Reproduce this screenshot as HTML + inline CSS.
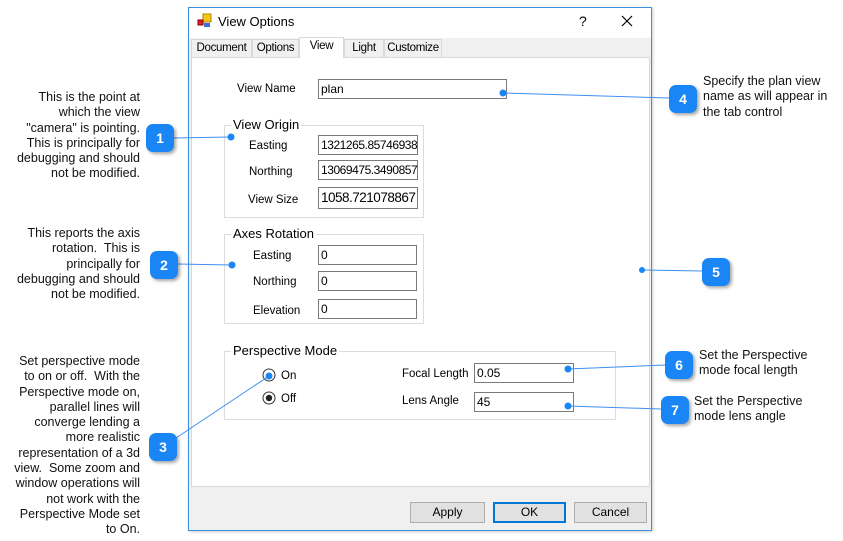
<!DOCTYPE html>
<html><head><meta charset="utf-8"><style>
*{margin:0;padding:0;box-sizing:border-box}
body{width:843px;height:541px;background:#fff;position:relative;overflow:hidden;font-family:"Liberation Sans",Arial,sans-serif;font-size:12px;color:#000}
.a{position:absolute}
.note{position:absolute;font-size:12.5px;line-height:15.3px;color:#111}
.r{text-align:right;right:703px}
.badge{position:absolute;width:28px;height:28px;border-radius:7px;background:#1a86f5;color:#fff;font-weight:bold;font-size:14px;text-align:center;line-height:28px;box-shadow:2px 2px 3px rgba(0,0,0,.35)}
.in{position:absolute;border:1px solid #7a7a7a;background:#fff;padding-left:2px;font-size:12px;line-height:19px;white-space:nowrap;overflow:hidden}
.gb{position:absolute;border:1px solid #dcdcdc}
.gt{position:absolute;background:#fff;font-size:13px;padding:0 2px;top:-9px;left:6px;line-height:16px}
.lb{position:absolute;font-size:11.5px;line-height:14px}
.btn{position:absolute;background:#e1e1e1;border:1px solid #adadad;text-align:center;line-height:18px;font-size:12px}
.tab{position:absolute;top:39px;height:19px;border:1px solid #d9d9d9;background:#f0f0f0;font-size:11.5px;line-height:17px;text-align:center;letter-spacing:-0.3px;white-space:nowrap}
</style></head><body>
<div class="a" style="left:188px;top:7px;width:464px;height:524px;border:1px solid #3b8ee0;background:#f0f0f0;box-shadow:1px 1px 3px rgba(0,0,0,.2)"></div>
<div class="a" style="left:189px;top:8px;width:462px;height:30px;background:#fff"></div>
<svg class="a" style="left:197px;top:13px" width="16" height="16"><rect x="6" y="1" width="8" height="8" fill="#f5c518" stroke="#b08a00"/><rect x="1" y="7" width="5" height="5" fill="#d22" stroke="#800"/><rect x="7" y="10" width="6" height="4" fill="#3b6fd0"/></svg>
<div class="a" style="left:218px;top:14px;font-size:13px">View Options</div>
<div class="a" style="left:579px;top:13px;font-size:14px">?</div>
<svg class="a" style="left:621px;top:15px" width="12" height="12"><path d="M1 1L11 11M11 1L1 11" stroke="#000" stroke-width="1.2"/></svg>
<div class="a" style="left:191px;top:57px;width:459px;height:430px;background:#fff;border:1px solid #d9d9d9"></div>
<div class="tab" style="left:191px;width:61px">Document</div>
<div class="tab" style="left:252px;width:47px">Options</div>
<div class="tab" style="left:299px;top:37px;height:21px;width:45px;background:#fff;border-bottom:none">View</div>
<div class="tab" style="left:344px;width:40px">Light</div>
<div class="tab" style="left:384px;width:58px">Customize</div>
<div class="lb" style="left:237px;top:82px">View Name</div>
<div class="in" style="left:318px;top:79px;width:189px;height:20px">plan</div>
<div class="gb" style="left:224px;top:125px;width:200px;height:93px"><div class="gt">View Origin</div></div>
<div class="lb" style="left:249px;top:139px">Easting</div>
<div class="lb" style="left:249px;top:165px">Northing</div>
<div class="lb" style="left:248px;top:193px">View Size</div>
<div class="in" style="left:318px;top:135px;width:100px;height:20px;letter-spacing:-0.45px">1321265.85746938</div>
<div class="in" style="left:318px;top:160px;width:100px;height:20px;letter-spacing:-0.45px">13069475.3490857</div>
<div class="in" style="left:318px;top:187px;width:100px;height:22px;font-size:13.5px;line-height:20px;letter-spacing:-0.5px">1058.721078867</div>
<div class="gb" style="left:224px;top:234px;width:200px;height:90px"><div class="gt">Axes Rotation</div></div>
<div class="lb" style="left:253px;top:249px">Easting</div>
<div class="lb" style="left:253px;top:275px">Northing</div>
<div class="lb" style="left:253px;top:304px">Elevation</div>
<div class="in" style="left:318px;top:245px;width:99px;height:20px">0</div>
<div class="in" style="left:318px;top:271px;width:99px;height:20px">0</div>
<div class="in" style="left:318px;top:299px;width:99px;height:20px">0</div>
<div class="gb" style="left:224px;top:351px;width:392px;height:69px"><div class="gt">Perspective Mode</div></div>
<svg class="a" style="left:262px;top:368px" width="14" height="38"><circle cx="7" cy="7" r="6" fill="#fff" stroke="#333"/><circle cx="7" cy="30" r="6" fill="#fff" stroke="#333"/><circle cx="7" cy="30" r="3.2" fill="#222"/></svg>
<div class="lb" style="left:281px;top:369px">On</div>
<div class="lb" style="left:281px;top:392px">Off</div>
<div class="lb" style="left:402px;top:367px">Focal Length</div>
<div class="lb" style="left:402px;top:394px">Lens Angle</div>
<div class="in" style="left:474px;top:363px;width:100px;height:20px">0.05</div>
<div class="in" style="left:474px;top:392px;width:100px;height:20px">45</div>
<div class="btn" style="left:410px;top:502px;width:75px;height:21px">Apply</div>
<div class="btn" style="left:493px;top:502px;width:73px;height:21px;border:2px solid #0078d7;line-height:17px">OK</div>
<div class="btn" style="left:574px;top:502px;width:73px;height:21px">Cancel</div>
<svg class="a" style="left:0;top:0" width="843" height="541">
<g stroke="#3f8ff0" stroke-width="1" fill="none">
<line x1="173" y1="138" x2="231" y2="137"/>
<line x1="177" y1="264" x2="232" y2="265"/>
<line x1="176" y1="438" x2="269" y2="376"/>
<line x1="503" y1="93" x2="669" y2="98"/>
<line x1="642" y1="270" x2="702" y2="271"/>
<line x1="568" y1="369" x2="665" y2="365"/>
<line x1="568" y1="406" x2="661" y2="409"/>
</g>
<g fill="#1a86f5">
<circle cx="231" cy="137" r="3.5"/><circle cx="232" cy="265" r="3.5"/><circle cx="269" cy="376" r="3.5"/>
<circle cx="503" cy="93" r="3.5"/><circle cx="642" cy="270" r="3"/><circle cx="568" cy="369" r="3.5"/><circle cx="568" cy="406" r="3.5"/>
</g></svg>
<div class="badge" style="left:146px;top:124px">1</div>
<div class="badge" style="left:150px;top:251px">2</div>
<div class="badge" style="left:149px;top:433px">3</div>
<div class="badge" style="left:669px;top:85px">4</div>
<div class="badge" style="left:702px;top:258px">5</div>
<div class="badge" style="left:665px;top:351px">6</div>
<div class="badge" style="left:661px;top:396px">7</div>
<div class="note r" style="top:90px">This is the point at<br>which the view<br>"camera" is pointing.<br>This is principally for<br>debugging and should<br>not be modified.</div>
<div class="note r" style="top:226px">This reports the axis<br>rotation.&nbsp; This is<br>principally for<br>debugging and should<br>not be modified.</div>
<div class="note r" style="top:354px">Set perspective mode<br>to on or off.&nbsp; With the<br>Perspective mode on,<br>parallel lines will<br>converge lending a<br>more realistic<br>representation of a 3d<br>view.&nbsp; Some zoom and<br>window operations will<br>not work with the<br>Perspective Mode set<br>to On.</div>
<div class="note" style="left:703px;top:74px">Specify the plan view<br>name as will appear in<br>the tab control</div>
<div class="note" style="left:699px;top:348px">Set the Perspective<br>mode focal length</div>
<div class="note" style="left:694px;top:394px">Set the Perspective<br>mode lens angle</div>
</body></html>
